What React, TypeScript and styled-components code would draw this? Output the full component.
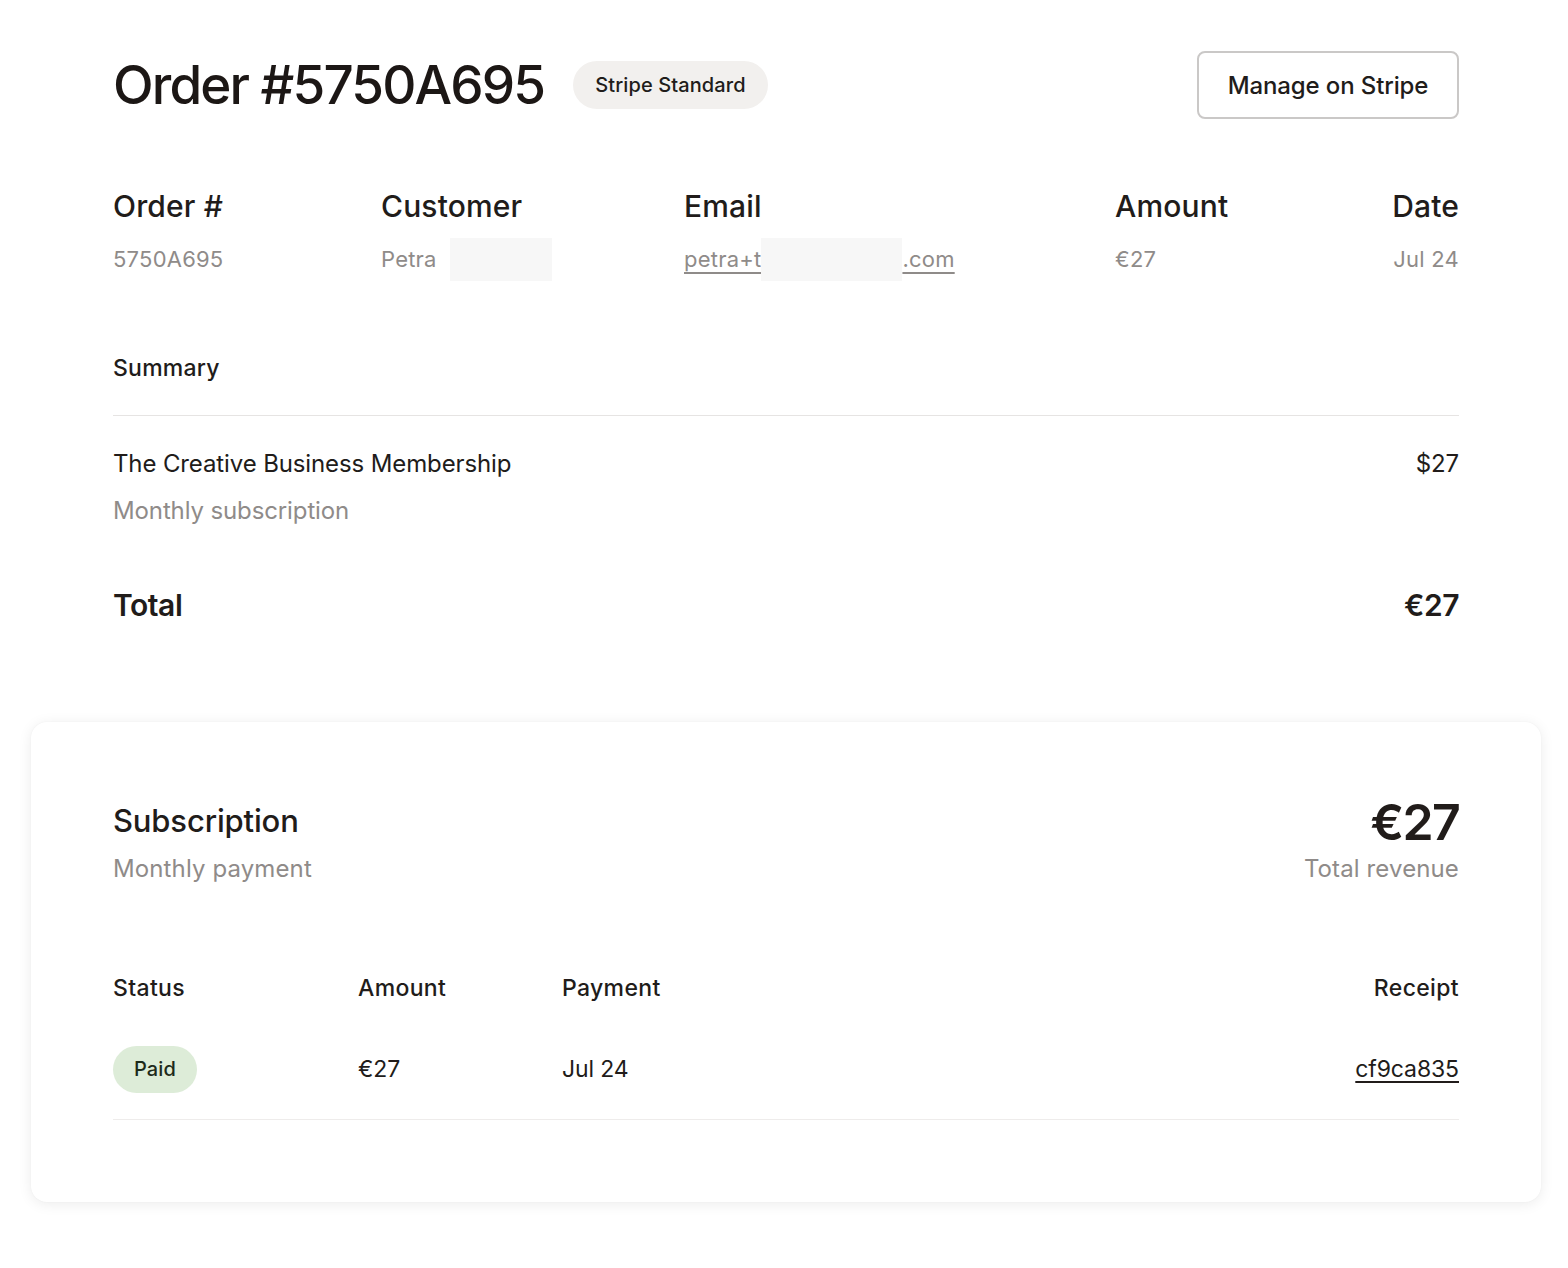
import React from "react";
import styled, { createGlobalStyle } from "styled-components";

const GlobalStyle = createGlobalStyle`
  html, body {
    margin: 0;
    padding: 0;
    background: #ffffff;
  }
  body {
    font-family: Inter, "Liberation Sans", Arial, sans-serif;
    color: #211c1a;
    -webkit-font-smoothing: antialiased;
  }
  * { box-sizing: border-box; }
`;

const Page = styled.div`
  width: 1568px;
  padding: 51px 27px 60px 31px;
`;

const Main = styled.section`
  padding: 0 82px;
`;

const Header = styled.header`
  display: flex;
  align-items: center;
  height: 68px;
`;

const Title = styled.h1`
  margin: 0;
  font-size: 53px;
  line-height: 68px;
  font-weight: 500;
  letter-spacing: -0.035em;
  color: #1c1715;
`;

const Pill = styled.span<{ $tone?: "neutral" | "success" }>`
  display: inline-flex;
  align-items: center;
  justify-content: center;
  height: ${(p) => (p.$tone === "success" ? "47px" : "48px")};
  padding: 0 ${(p) => (p.$tone === "success" ? "21px" : "22px")};
  border-radius: 999px;
  background: ${(p) => (p.$tone === "success" ? "#ddecd8" : "#f2f0ee")};
  color: ${(p) => (p.$tone === "success" ? "#1d2a1a" : "#211c1a")};
  font-size: 20px;
  font-weight: 500;
  letter-spacing: 0.005em;
`;

const HeaderPill = styled(Pill)`
  margin-left: 29px;
`;

const OutlineButton = styled.button`
  margin-left: auto;
  width: 262px;
  height: 68px;
  border: 2px solid #cac8c7;
  border-radius: 8px;
  background: #ffffff;
  font-family: inherit;
  font-size: 24px;
  font-weight: 500;
  letter-spacing: -0.005em;
  color: #211c1a;
  cursor: pointer;
`;

const InfoGrid = styled.div`
  margin-top: 69px;
  display: grid;
  grid-template-columns: 268px 303px 431px 1fr auto;
  row-gap: 14px;
`;

const InfoLabel = styled.div<{ $end?: boolean }>`
  font-size: 30px;
  line-height: 36px;
  font-weight: 500;
  letter-spacing: 0.005em;
  text-align: ${(p) => (p.$end ? "right" : "left")};
`;

const InfoValue = styled.div<{ $end?: boolean }>`
  font-size: 22px;
  line-height: 43px;
  color: #8f8b89;
  letter-spacing: 0.01em;
  white-space: nowrap;
  display: flex;
  align-items: center;
  justify-content: ${(p) => (p.$end ? "flex-end" : "flex-start")};
`;

const Link = styled.span`
  text-decoration: underline;
  text-decoration-color: #8f8b89;
  text-decoration-thickness: 2px;
  text-underline-offset: 5px;
`;

const Redacted = styled.span<{ $w: number }>`
  display: inline-block;
  width: ${(p) => p.$w}px;
  height: 43px;
  background: #f7f7f7;
`;

const SummaryTitle = styled.h2`
  margin: 72px 0 0;
  padding-bottom: 32px;
  border-bottom: 1px solid #e6e4e3;
  font-size: 23px;
  line-height: 30px;
  font-weight: 500;
  letter-spacing: 0.01em;
`;

const LineItem = styled.div`
  margin-top: 32px;
  display: grid;
  grid-template-columns: 1fr auto;
  row-gap: 15px;
`;

const ItemName = styled.div<{ $muted?: boolean; $end?: boolean }>`
  font-size: 24px;
  line-height: 32px;
  letter-spacing: -0.005em;
  color: ${(p) => (p.$muted ? "#8f8b89" : "#211c1a")};
  text-align: ${(p) => (p.$end ? "right" : "left")};
`;

const TotalRow = styled.div`
  margin-top: 58px;
  display: flex;
  justify-content: space-between;
  font-size: 30px;
  line-height: 40px;
  font-weight: 600;
  letter-spacing: -0.015em;
`;

const Card = styled.section`
  margin-top: 97px;
  padding: 72px 82px 82px;
  background: #ffffff;
  border-radius: 16px;
  box-shadow: 0 2px 14px rgba(0, 0, 0, 0.08), 0 0 2px rgba(0, 0, 0, 0.04);
`;

const CardHeader = styled.div`
  display: flex;
  justify-content: space-between;
  align-items: flex-end;
`;

const Stack = styled.div<{ $end?: boolean; $gap: number }>`
  display: flex;
  flex-direction: column;
  align-items: ${(p) => (p.$end ? "flex-end" : "flex-start")};
  gap: ${(p) => p.$gap}px;
`;

const CardTitle = styled.h3`
  margin: 0;
  font-size: 31px;
  line-height: 40px;
  font-weight: 500;
  letter-spacing: -0.005em;
`;

const BigFigure = styled.div`
  font-size: 50px;
  line-height: 56px;
  font-weight: 600;
  letter-spacing: -0.035em;
`;

const Muted = styled.div`
  font-size: 24px;
  line-height: 32px;
  color: #8f8b89;
  letter-spacing: 0.005em;
`;

const TableGrid = styled.div`
  margin-top: 88px;
  display: grid;
  grid-template-columns: 245px 204px 1fr auto;
`;

const Th = styled.div<{ $end?: boolean }>`
  font-size: 23px;
  line-height: 30px;
  font-weight: 500;
  letter-spacing: 0.015em;
  text-align: ${(p) => (p.$end ? "right" : "left")};
`;

const Td = styled.div<{ $end?: boolean }>`
  display: flex;
  align-items: center;
  justify-content: ${(p) => (p.$end ? "flex-end" : "flex-start")};
  padding: 43px 0 26px;
  border-bottom: 1px solid #eeeceb;
  font-size: 23px;
  line-height: 47px;
  letter-spacing: -0.005em;
`;

const Receipt = styled.a`
  color: #211c1a;
  text-decoration: underline;
  text-decoration-thickness: 2px;
  text-underline-offset: 4px;
`;

export default function App() {
  return (
    <>
      <GlobalStyle />
      <Page>
        <Main>
          <Header>
            <Title>Order #5750A695</Title>
            <HeaderPill>Stripe Standard</HeaderPill>
            <OutlineButton>Manage on Stripe</OutlineButton>
          </Header>

          <InfoGrid>
            <InfoLabel>Order #</InfoLabel>
            <InfoLabel>Customer</InfoLabel>
            <InfoLabel>Email</InfoLabel>
            <InfoLabel>Amount</InfoLabel>
            <InfoLabel $end>Date</InfoLabel>

            <InfoValue>5750A695</InfoValue>
            <InfoValue>
              Petra&nbsp;&nbsp;<Redacted $w={102} />
            </InfoValue>
            <InfoValue>
              <Link>petra+t</Link>
              <Redacted $w={141} />
              <Link>.com</Link>
            </InfoValue>
            <InfoValue>€27</InfoValue>
            <InfoValue $end>Jul 24</InfoValue>
          </InfoGrid>

          <SummaryTitle>Summary</SummaryTitle>
          <LineItem>
            <ItemName>The Creative Business Membership</ItemName>
            <ItemName $end>$27</ItemName>
            <ItemName $muted>Monthly subscription</ItemName>
          </LineItem>

          <TotalRow>
            <span>Total</span>
            <span>€27</span>
          </TotalRow>
        </Main>

        <Card>
          <CardHeader>
            <Stack $gap={12}>
              <CardTitle>Subscription</CardTitle>
              <Muted>Monthly payment</Muted>
            </Stack>
            <Stack $end $gap={3}>
              <BigFigure>€27</BigFigure>
              <Muted>Total revenue</Muted>
            </Stack>
          </CardHeader>

          <TableGrid>
            <Th>Status</Th>
            <Th>Amount</Th>
            <Th>Payment</Th>
            <Th $end>Receipt</Th>

            <Td>
              <Pill $tone="success">Paid</Pill>
            </Td>
            <Td>€27</Td>
            <Td>Jul 24</Td>
            <Td $end>
              <Receipt href="#">cf9ca835</Receipt>
            </Td>
          </TableGrid>
        </Card>
      </Page>
    </>
  );
}
